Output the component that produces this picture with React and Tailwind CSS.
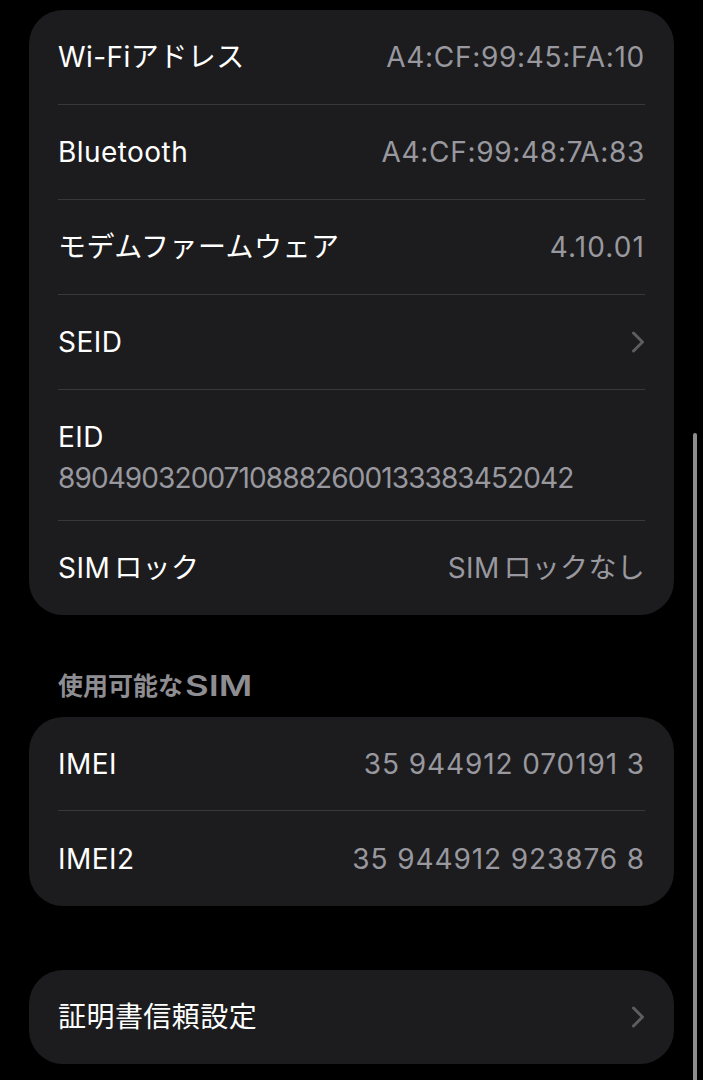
import React from "react";

const font = { fontFamily: 'Inter, "Noto Sans CJK JP", sans-serif' };

function Chevron() {
  return (
    <svg width="14" height="22" viewBox="0 0 14 22" fill="none" className="shrink-0">
      <polyline points="2.5,2 11.5,11 2.5,20" stroke="#5c5c61" strokeWidth="3" strokeLinecap="round" strokeLinejoin="round" />
    </svg>
  );
}

function Row({ label, value, chevron, last, h = "h-[95px]", vt = "tracking-[0.7px]" }) {
  return (
    <div className={`${h} flex items-center justify-between ${last ? "" : "border-b-[1.5px] border-[#38383a]"}`}>
      <span className="text-[28px] text-white leading-none tracking-[0.45px]">{label}</span>
      {value && <span className={`text-[28px] text-[#98989e] leading-none ${vt}`}>{value}</span>}
      {chevron && <Chevron />}
    </div>
  );
}

export default function App() {
  return (
    <div className="relative min-h-[1080px] bg-black overflow-hidden" style={font}>
      <div className="flex flex-col px-[29px] pt-[10px]">
        <div className="rounded-[34px] bg-[#1c1c1e] px-[29px]">
          <Row label="Wi-Fiアドレス" value="A4:CF:99:45:FA:10" />
          <Row label="Bluetooth" value="A4:CF:99:48:7A:83" />
          <Row label="モデムファームウェア" value="4.10.01" vt="tracking-[1.1px]" />
          <Row label="SEID" chevron />
          <div className="h-[131px] flex flex-col justify-center pt-[6px] border-b-[1.5px] border-[#38383a]">
            <span className="text-[28px] text-white leading-[41px] tracking-[0.45px]">EID</span>
            <span className="text-[28px] text-[#98989e] leading-[41px] tracking-[-0.9px]">89049032007108882600133383452042</span>
          </div>
          <Row
            label={<><span className="mr-[4px]">SIM</span>ロック</>}
            value={<><span className="mr-[4px]">SIM</span>ロックなし</>}
            vt="tracking-[0.3px]"
            last
            h="h-[94px]"
          />
        </div>

        <div className="mt-[55px] mb-[15px] px-[29px] h-[32px] flex items-center text-[#8d8d92] font-semibold">
          <span className="text-[25px] leading-none">使用可能な</span>
          <span className="ml-[2px] inline-block origin-left scale-x-[1.3] text-[28px] leading-none">SIM</span>
        </div>

        <div className="rounded-[34px] bg-[#1c1c1e] px-[29px]">
          <Row label="IMEI" value="35 944912 070191 3" vt="tracking-[0.9px]" h="h-[94px]" />
          <Row label="IMEI2" value="35 944912 923876 8" vt="tracking-[0.9px]" last />
        </div>

        <div className="mt-[64px] rounded-[34px] bg-[#1c1c1e] px-[29px]">
          <Row label="証明書信頼設定" chevron last h="h-[94px]" />
        </div>
      </div>

      <div className="absolute left-[693px] top-[433px] w-[4px] h-[700px] rounded-full bg-[#8e8e8e]" />
    </div>
  );
}
